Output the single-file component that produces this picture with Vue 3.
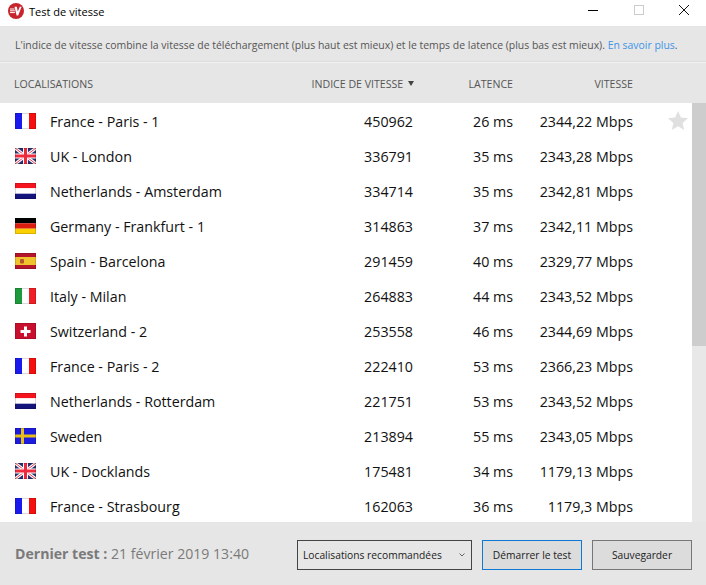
<script setup>
const rows = [
  { flag: 'fr', name: 'France - Paris - 1', score: 450962, lat: '26 ms', speed: '2344,22 Mbps', star: true },
  { flag: 'uk', name: 'UK - London', score: 336791, lat: '35 ms', speed: '2343,28 Mbps' },
  { flag: 'nl', name: 'Netherlands - Amsterdam', score: 334714, lat: '35 ms', speed: '2342,81 Mbps' },
  { flag: 'de', name: 'Germany - Frankfurt - 1', score: 314863, lat: '37 ms', speed: '2342,11 Mbps' },
  { flag: 'es', name: 'Spain - Barcelona', score: 291459, lat: '40 ms', speed: '2329,77 Mbps' },
  { flag: 'it', name: 'Italy - Milan', score: 264883, lat: '44 ms', speed: '2343,52 Mbps' },
  { flag: 'ch', name: 'Switzerland - 2', score: 253558, lat: '46 ms', speed: '2344,69 Mbps' },
  { flag: 'fr', name: 'France - Paris - 2', score: 222410, lat: '53 ms', speed: '2366,23 Mbps' },
  { flag: 'nl', name: 'Netherlands - Rotterdam', score: 221751, lat: '53 ms', speed: '2343,52 Mbps' },
  { flag: 'se', name: 'Sweden', score: 213894, lat: '55 ms', speed: '2343,05 Mbps' },
  { flag: 'uk', name: 'UK - Docklands', score: 175481, lat: '34 ms', speed: '1179,13 Mbps' },
  { flag: 'fr', name: 'France - Strasbourg', score: 162063, lat: '36 ms', speed: '1179,3 Mbps' },
]
</script>

<template>
  <div class="win">
    <header class="title">
      <svg class="logo" width="16" height="16" viewBox="0 0 16 16">
        <circle cx="8" cy="8" r="8" fill="#c8242d" />
        <path d="M2 6h4.500M2 7.800h4.800M2 9.600h5" stroke="#fff" stroke-width="1" />
        <path d="M6.500 3.800h2.300l1 4.800 2-4.800h1.800L10.200 12.500H8.600z" fill="#fff" />
      </svg>
      <span class="title-text">Test de vitesse</span>
      <div class="controls">
        <svg width="12" height="12" viewBox="0 0 12 12"><path d="M1 6.500h10" stroke="#000" /></svg>
        <svg width="12" height="12" viewBox="0 0 12 12"><rect x="1.500" y="1.500" width="9" height="9" fill="none" stroke="#ccc" /></svg>
        <svg width="12" height="12" viewBox="0 0 12 12"><path d="M1 1l10 10M11 1L1 11" stroke="#111" /></svg>
      </div>
    </header>

    <p class="info">L'indice de vitesse combine la vitesse de téléchargement (plus haut est mieux) et le temps de latence (plus bas est mieux). <a>En savoir plus</a>.</p>

    <div class="head">
      <span class="c-name">LOCALISATIONS</span>
      <span class="c-score">INDICE DE VITESSE <i class="sort"></i></span>
      <span class="c-lat">LATENCE</span>
      <span class="c-speed">VITESSE</span>
    </div>

    <div class="body">
      <div class="list">
        <div v-for="r in rows" :key="r.name" class="row">
          <svg class="flag" width="21" height="16" viewBox="0 0 21 16">
            <template v-if="r.flag === 'fr'">
              <rect width="7" height="16" fill="#1a1aee" /><rect x="7" width="7" height="16" fill="#fff" /><rect x="14" width="7" height="16" fill="#f50f0f" />
            </template>
            <template v-else-if="r.flag === 'nl'">
              <rect width="21" height="5.300" fill="#f5141e" /><rect y="5.300" width="21" height="5.400" fill="#fff" /><rect y="10.700" width="21" height="5.300" fill="#14147d" />
            </template>
            <template v-else-if="r.flag === 'de'">
              <rect width="21" height="5.300" fill="#000" /><rect y="5.300" width="21" height="5.400" fill="#dd1c10" /><rect y="10.700" width="21" height="5.300" fill="#fcd000" />
            </template>
            <template v-else-if="r.flag === 'es'">
              <rect width="21" height="16" fill="#b5152b" /><rect y="4" width="21" height="8" fill="#f0c22c" /><rect x="5" y="6" width="4" height="4.500" rx="1" fill="#b4552a" />
            </template>
            <template v-else-if="r.flag === 'it'">
              <rect width="7" height="16" fill="#1c9a3c" /><rect x="7" width="7" height="16" fill="#fff" /><rect x="14" width="7" height="16" fill="#f01e26" />
            </template>
            <template v-else-if="r.flag === 'ch'">
              <rect width="21" height="16" fill="#c8102e" /><path d="M9 3.500h3V7h3.500v3H12v3.500H9V10H5.500V7H9z" fill="#fff" />
            </template>
            <template v-else-if="r.flag === 'se'">
              <rect width="21" height="16" fill="#1c1ce0" /><rect x="6" width="3" height="16" fill="#e8bf14" /><rect y="6.500" width="21" height="3" fill="#e8bf14" />
            </template>
            <template v-else>
              <rect width="21" height="16" fill="#2a2f6e" />
              <path d="M0 0l21 16M21 0L0 16" stroke="#fff" stroke-width="3" />
              <path d="M0 0l21 16M21 0L0 16" stroke="#ee3b4e" stroke-width="1" />
              <path d="M10.500 0v16M0 8h21" stroke="#fff" stroke-width="5" />
              <path d="M10.500 0v16M0 8h21" stroke="#ee2b3e" stroke-width="3" />
            </template>
            <rect x=".5" y=".5" width="20" height="15" fill="none" stroke="#000" stroke-opacity=".15" />
          </svg>
          <span class="c-name name">{{ r.name }}</span>
          <span class="c-score num">{{ r.score }}</span>
          <span class="c-lat num">{{ r.lat }}</span>
          <span class="c-speed num">{{ r.speed }}</span>
          <svg v-if="r.star" class="star" width="20" height="19" viewBox="0 0 20 19">
            <path d="M10 0l2.900 6.600 7.100.7-5.400 4.700 1.600 7L10 15.300 3.800 19l1.600-7L0 7.300l7.100-.7z" fill="#e0e0e0" />
          </svg>
        </div>
      </div>
      <div class="track"><div class="thumb"></div></div>
    </div>

    <footer class="foot">
      <div class="last"><b>Dernier test :</b> 21 février 2019 13:40</div>
      <div class="select">
        <span>Localisations recommandées</span>
        <svg width="6" height="4" viewBox="0 0 6 4"><path d="M.5.500 3 3 5.500.500" fill="none" stroke="#666" /></svg>
      </div>
      <button class="btn primary">Démarrer le test</button>
      <button class="btn">Sauvegarder</button>
    </footer>
  </div>
</template>

<style>
html, body { margin: 0; background: #fff; }
</style>

<style scoped>
.win {
  width: 706px;
  height: 585px;
  display: flex;
  flex-direction: column;
  overflow: hidden;
  font-family: "Open Sans", "Noto Sans", sans-serif;
  background: #e6e6e6;
  color: #111;
}
.title {
  height: 26px;
  flex: none;
  box-sizing: border-box;
  background: #fff;
  display: flex;
  align-items: center;
  padding: 0 0 4px 8px;
}
.title-text { margin-left: 5px; font-size: 11.05px; color: #000; }
.logo { flex: none; }
.controls { margin-left: auto; margin-bottom: 2px; display: flex; gap: 33.500px; padding-right: 16px; align-items: center; }
.info {
  height: 36px;
  flex: none;
  box-sizing: border-box;
  margin: 0;
  padding: 0 0 0 15px;
  line-height: 38px;
  font-size: 10.45px;
  color: #555;
  white-space: nowrap;
  border-bottom: 1px solid #dcdcdc;
  box-shadow: 0 1px 0 #f2f2f2;
}
.info a { color: #3d94e8; }
.head {
  height: 41px;
  flex: none;
  box-sizing: border-box;
  display: flex;
  align-items: center;
  font-size: 10.6px;
  color: #555;
  padding: 2px 0 0 14px;
}
.head .c-name { width: 271px; }
.c-score { width: 129px; flex: none; text-align: right; white-space: nowrap; }
.c-lat { width: 99px; flex: none; text-align: right; white-space: nowrap; }
.c-speed { width: 120px; flex: none; text-align: right; white-space: nowrap; }
.sort {
  display: inline-block;
  width: 0;
  height: 0;
  margin-left: 2px;
  vertical-align: 2px;
  border-left: 3.500px solid transparent;
  border-right: 3.500px solid transparent;
  border-top: 5px solid #444;
}
.body {
  height: 419px;
  flex: none;
  display: flex;
  background: #fff;
}
.list { flex: 1; min-width: 0; }
.row {
  height: 35px;
  position: relative;
  display: flex;
  align-items: center;
  padding-left: 15px;
  font-size: 14.25px;
  color: #111;
}
.row .c-name, .row .num { padding-top: 2px; }
.flag { flex: none; margin-right: 14px; }
.row .c-name { width: 271px; flex: none; white-space: nowrap; }
.row .c-score { width: 92px; }
.row .c-lat { width: 100px; }
.star { position: absolute; left: 668px; top: 8px; }
.track { width: 14px; flex: none; background: #e8e8e8; }
.thumb { height: 243px; background: #cdcdcd; }
.foot {
  flex: 1;
  display: flex;
  align-items: center;
  padding: 3px 14px 0 15px;
}
.last { font-size: 14.1px; color: #7a7a7a; width: 282px; flex: none; white-space: nowrap; margin-top: -4px; }
.last b { font-weight: 700; }
.select {
  width: 175px;
  height: 30px;
  flex: none;
  box-sizing: border-box;
  border: 1px solid #444;
  display: flex;
  align-items: center;
  justify-content: space-between;
  padding: 0 6px 0 5px;
  font-size: 10.25px;
  color: #222;
  white-space: nowrap;
}
.btn {
  height: 30px;
  width: 100px;
  flex: none;
  box-sizing: border-box;
  padding: 0;
  margin-left: 10px;
  font: inherit;
  font-size: 10.25px;
  color: #222;
  background: #dcdcdc;
  border: 1px solid #777;
}
.btn.primary { border-color: #0f78d4; }
</style>
